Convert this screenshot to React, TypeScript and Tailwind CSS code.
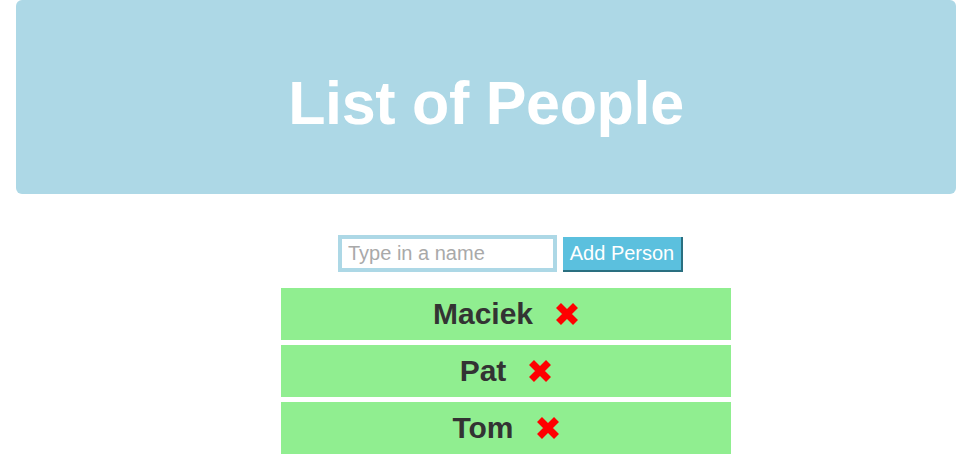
import React from "react";

function RedX() {
  return (
    <svg width="24" height="24" viewBox="0 0 24 24" className="shrink-0">
      <path d="M3.5 3.5 L20.5 20.5 M20.5 3.5 L3.5 20.5" stroke="#ff0000" strokeWidth="7" strokeLinecap="butt" fill="none" />
    </svg>
  );
}

const people = ["Maciek", "Pat", "Tom"];

export default function App() {
  return (
    <div className="w-[974px] h-[476px] bg-white overflow-hidden" style={{ fontFamily: '"Liberation Sans", Arial, Helvetica, sans-serif' }}>
      <div className="ml-[16px] mr-[18px] h-[194px] bg-[#add8e6] rounded-[6px] flex items-center justify-center">
        <h1 className="text-white font-bold text-[61px] leading-none tracking-[-0.3px] mt-[12px]">List of People</h1>
      </div>
      <div className="flex items-start ml-[338px] mt-[41px]">
        <input
          type="text"
          placeholder="Type in a name"
          className="w-[219px] h-[37px] border-[4px] border-[#add8e6] bg-white px-[6px] text-[20px] text-[#333] placeholder:text-[#a9a9a9] outline-none"
        />
        <button className="ml-[6px] mt-[2px] w-[120px] h-[35px] bg-[#5bc0de] text-white text-[20px] leading-none border-b-[2px] border-r-[2px] border-[#2a6f80] flex items-center justify-center pb-[1px]">
          Add Person
        </button>
      </div>
      <div className="ml-[281px] w-[450px] mt-[16px] flex flex-col gap-[5px]">
        {people.map((p) => (
          <div key={p} className="h-[52px] bg-[#90ee90] flex items-center justify-center gap-[22px]">
            <span className="text-[30px] font-bold text-[#333] leading-none">{p}</span>
            <RedX />
          </div>
        ))}
      </div>
    </div>
  );
}
